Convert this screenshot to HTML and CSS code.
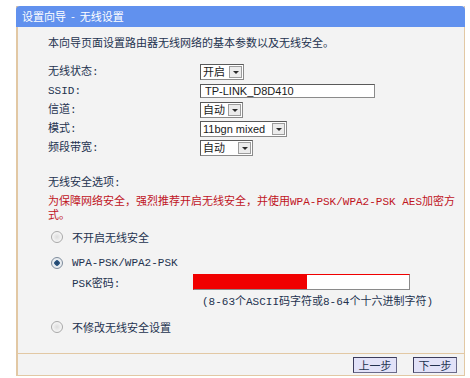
FILE: index.html
```html
<!DOCTYPE html>
<html lang="zh-CN">
<head>
    <meta charset="UTF-8">
    <meta name="viewport" content="width=device-width, initial-scale=1.0">
    <title>设置向导 - 无线设置</title>
    <link rel="stylesheet" href="styles.css">
</head>
<body>
    <div class="panel">
        <div class="title">设置向导 &nbsp;-&nbsp; 无线设置</div>

        <div class="content">
            <p class="intro">本向导页面设置路由器无线网络的基本参数以及无线安全。</p>

            <div class="fields">
                <label class="label">无线状态:</label>
                <span class="select w-44">
                    <select><option>开启</option><option>关闭</option></select>
                    <i class="caret"></i>
                </span>

                <label class="label">SSID:</label>
                <input type="text" class="text ssid" value="TP-LINK_D8D410">

                <label class="label">信道:</label>
                <span class="select w-43">
                    <select><option>自动</option><option>1</option><option>6</option><option>11</option></select>
                    <i class="caret"></i>
                </span>

                <label class="label">模式:</label>
                <span class="select w-87">
                    <select><option>11bgn mixed</option><option>11bg mixed</option></select>
                    <i class="caret"></i>
                </span>

                <label class="label">频段带宽:</label>
                <span class="select w-53">
                    <select><option>自动</option><option>20MHz</option><option>40MHz</option></select>
                    <i class="caret"></i>
                </span>
            </div>

            <p class="sec-title">无线安全选项:</p>
            <p class="warn">为保障网络安全，强烈推荐开启无线安全，并使用WPA-PSK/WPA2-PSK AES加密方式。</p>

            <label class="radio r-first"><input type="radio" name="sec">不开启无线安全</label>
            <label class="radio"><input type="radio" name="sec" checked>WPA-PSK/WPA2-PSK</label>

            <div class="psk">
                <span class="psk-label">PSK密码:</span>
                <input type="text" class="text psk-input">
            </div>
            <p class="hint">(8-63个ASCII码字符或8-64个十六进制字符)</p>

            <label class="radio"><input type="radio" name="sec">不修改无线安全设置</label>
        </div>

        <div class="footer">
            <button type="button">上一步</button>
            <button type="button">下一步</button>
        </div>
    </div>
</body>
</html>
```

FILE: styles.css
```css
* {
    box-sizing: border-box;
    margin: 0;
    padding: 0;
}

body {
    background-color: #ffffff;
    font-family: "Liberation Mono", "Noto Sans CJK SC", sans-serif;
    font-size: 11px;
    color: #23324f;
}

.panel {
    display: flex;
    flex-direction: column;
    width: 449px;
    height: 370px;
    margin: 6px 0 0 16px;
    background-color: #f3f3f3;
    border: 1px solid #e2c8a4;
    border-top: 0;
    border-left-width: 2px;
}

.title {
    height: 21px;
    margin: 0 -1px 0 -2px;
    padding-left: 6px;
    line-height: 21px;
    color: #ffffff;
    background-color: #6191ee;
    border-radius: 4px 4px 0 0;
    font-family: "Noto Sans CJK SC", sans-serif;
}

.content {
    flex: 1;
    padding: 10px 0 0 30px;
}

.intro {
    line-height: 14px;
    margin-bottom: 13px;
}

/* basic settings */
.fields {
    display: grid;
    grid-template-columns: 152px auto;
    row-gap: 3px;
    align-items: center;
    justify-items: start;
}

.label {
    line-height: 16px;
}

.select {
    display: inline-flex;
    align-items: center;
    height: 16px;
    background-color: #ffffff;
    border: 1px solid #5a5a5a;
    border-right-color: #8a8a8a;
    border-bottom-color: #8a8a8a;
}

.select select {
    flex: 1;
    min-width: 0;
    height: 14px;
    padding-left: 2px;
    border: 0;
    outline: none;
    appearance: none;
    background: transparent;
    color: #1a1a1a;
    font-family: "Liberation Sans", "Noto Sans CJK SC", sans-serif;
    font-size: 11px;
    line-height: 14px;
}

.caret {
    position: relative;
    width: 13px;
    height: 12px;
    margin-right: 1px;
    background-color: #ececec;
    border: 1px solid #9c9c9c;
}

.caret::after {
    content: "";
    position: absolute;
    left: 3px;
    top: 4px;
    border-left: 3px solid transparent;
    border-right: 3px solid transparent;
    border-top: 3px solid #2a2a2a;
}

.w-44 { width: 44px; }
.w-43 { width: 43px; }
.w-87 { width: 87px; }
.w-53 { width: 53px; }

.text {
    height: 14px;
    padding-left: 4px;
    border: 1px solid #5a5a5a;
    border-right-color: #8a8a8a;
    border-bottom-color: #8a8a8a;
    outline: none;
    background-color: #ffffff;
    color: #1a1a1a;
    font-family: "Liberation Sans", "Noto Sans CJK SC", sans-serif;
    font-size: 11px;
}

.ssid {
    width: 175px;
}

/* security */
.sec-title {
    line-height: 14px;
    margin-top: 20px;
    margin-bottom: 5px;
}

.warn {
    max-width: 410px;
    line-height: 14px;
    color: #c0141e;
}

.radio {
    display: flex;
    align-items: center;
    column-gap: 9px;
    height: 16px;
    margin-top: 10px;
    padding-left: 3px;
}

.r-first {
    margin-top: 6px;
}

.radio input {
    appearance: none;
    width: 12px;
    height: 12px;
    border: 1px solid #a8a8a8;
    border-radius: 50%;
    background: radial-gradient(circle, #dcdcdc 0, #f6f6f6 70%);
}

.radio input:checked {
    border-color: #7f8c9c;
    background: radial-gradient(circle, #1f3f63 0, #2f5a86 2.5px, #e8ecf0 3px);
}

.psk {
    display: flex;
    align-items: center;
    height: 16px;
    margin-top: 3px;
    padding-left: 24px;
}

.psk-label {
    flex: none;
    width: 121px;
}

/* the red block is the redaction in the screenshot */
.psk-input {
    flex: none;
    width: 217px;
    height: 16px;
    border-left-color: #f00000;
    border-top-color: #f00000;
    background: linear-gradient(to right, #f00000 113px, #ffffff 113px);
}

.hint {
    line-height: 14px;
    margin-top: 5px;
    padding-left: 154px;
}

/* footer */
.footer {
    display: flex;
    justify-content: flex-end;
    align-items: center;
    column-gap: 16px;
    height: 22px;
    padding-right: 7px;
    border-top: 1px solid #e2c8a4;
}

button {
    width: 44px;
    height: 16px;
    border: 1px solid #3c3c5c;
    border-right-color: #6a6a8a;
    border-bottom-color: #6a6a8a;
    background-color: #e2e2f8;
    color: #23324f;
    font-family: "Noto Sans CJK SC", sans-serif;
    font-size: 11px;
    line-height: 14px;
}
```
